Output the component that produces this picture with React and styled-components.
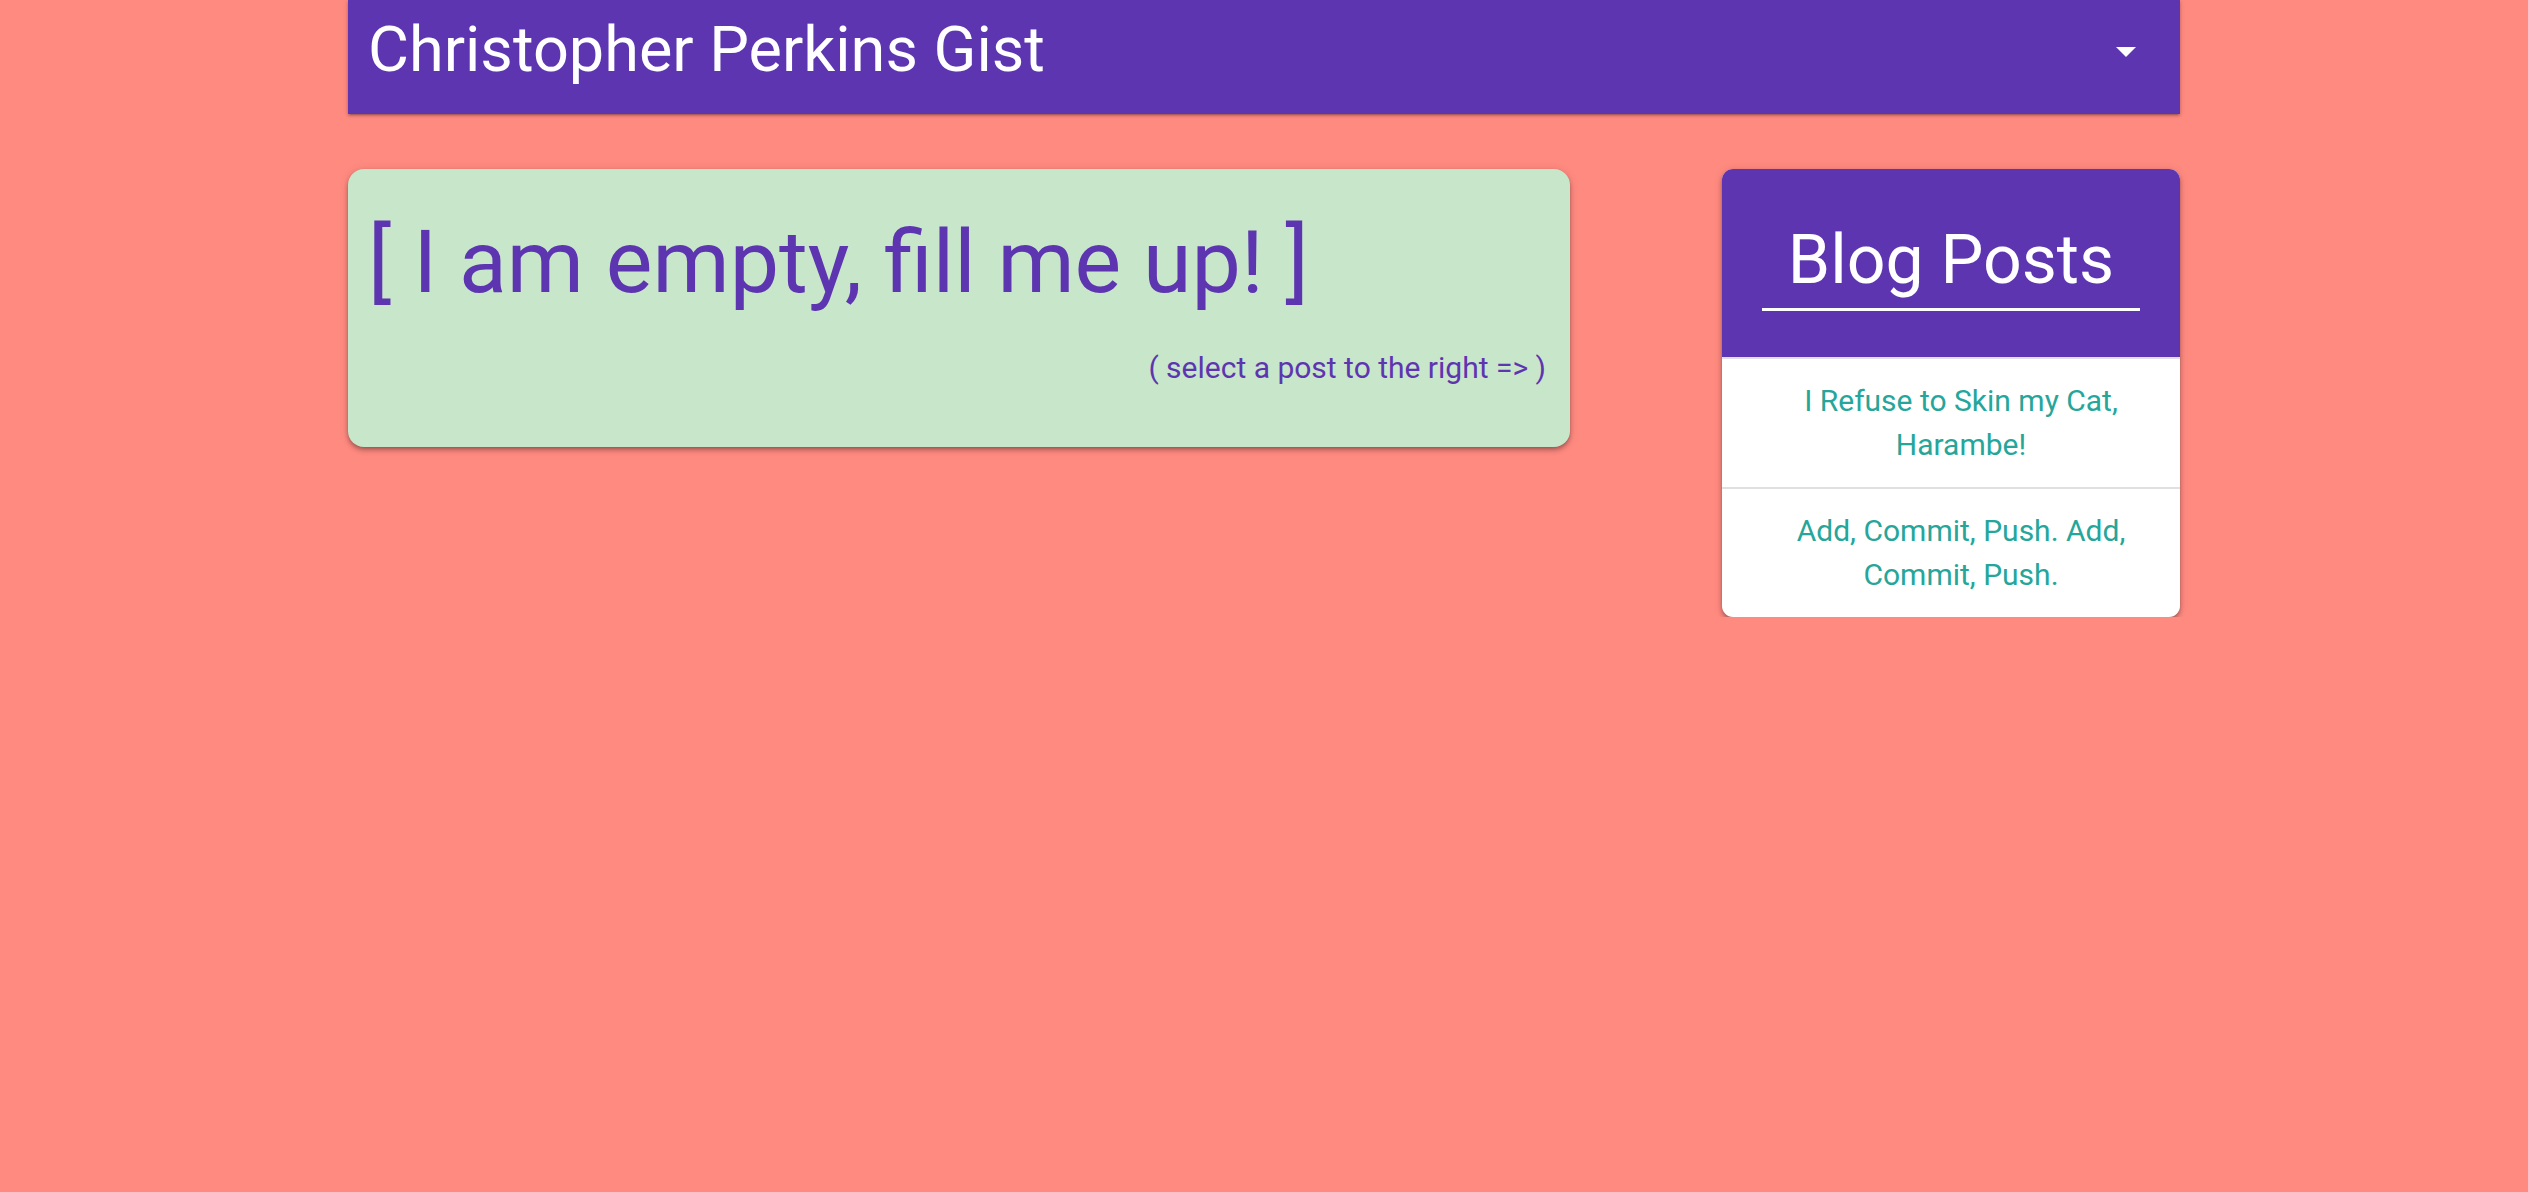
import React from 'react';
import styled, { createGlobalStyle } from 'styled-components';

const GlobalStyle = createGlobalStyle`
  html, body {
    margin: 0;
    padding: 0;
    background-color: #ff8a80;
    font-family: Roboto, "Noto Sans", sans-serif;
    font-weight: 400;
  }
`;

const navShadow = `0 2px 2px 0 rgba(0, 0, 0, 0.14), 0 3px 1px -2px rgba(0, 0, 0, 0.12), 0 1px 5px 0 rgba(0, 0, 0, 0.2)`;
const cardShadow = `0 4px 5px 0 rgba(0, 0, 0, 0.14), 0 1px 10px 0 rgba(0, 0, 0, 0.12), 0 2px 4px -1px rgba(0, 0, 0, 0.3)`;

const Container = styled.div`
  width: 1832px;
  margin: 0 auto;
`;

const Nav = styled.nav`
  height: 114px;
  display: flex;
  flex-direction: row;
  justify-content: space-between;
  align-items: flex-start;
  background-color: #5e35b1;
  box-shadow: ${navShadow};
  padding: 0 30px 0 20px;
  box-sizing: border-box;
`;

const Brand = styled.h1`
  margin: 0;
  padding-top: 12px;
  font-size: 63px;
  font-weight: 400;
  line-height: 75px;
  color: #fff;
`;

const DropButton = styled.button`
  border: none;
  background: none;
  padding: 0;
  margin-top: 27px;
  width: 48px;
  height: 48px;
  cursor: pointer;
`;

const Row = styled.div`
  display: grid;
  grid-template-columns: 1222px 458px;
  justify-content: space-between;
  align-items: start;
  margin-top: 55px;
`;

const EmptyCard = styled.div`
  background-color: #c8e6c9;
  border-radius: 16px;
  box-shadow: ${cardShadow};
  padding: 40px 24px 61px 20px;
`;

const EmptyTitle = styled.h2`
  margin: 0;
  font-size: 88px;
  font-weight: 400;
  line-height: 1.2;
  color: #5e35b1;
`;

const EmptyHint = styled.p`
  margin: 35px 0 0;
  text-align: right;
  font-size: 30px;
  line-height: 1.2;
  color: #5e35b1;
`;

const PostCard = styled.div`
  background-color: #fff;
  border-radius: 11px;
  box-shadow: ${cardShadow};
  overflow: hidden;
`;

const PostHeader = styled.div`
  background-color: #5e35b1;
  padding: 51px 40px 46px;
  border-bottom: 2px solid #e0e0e0;
`;

const PostHeading = styled.h3`
  margin: 0;
  padding-bottom: 6px;
  border-bottom: 3px solid #fff;
  text-align: center;
  font-size: 68px;
  font-weight: 400;
  line-height: 1.2;
  color: #fff;
`;

const PostList = styled.ul`
  list-style: none;
  margin: 0;
  padding: 0;
`;

const PostItem = styled.li`
  border-bottom: ${(p) => (p.last ? 'none' : '2px solid #e0e0e0')};
`;

const PostLink = styled.a`
  display: block;
  padding: 20px 30px 20px 50px;
  text-align: center;
  font-size: 30px;
  line-height: 44px;
  color: #26a69a;
  text-decoration: none;
  cursor: pointer;
`;

const posts = [
  'I Refuse to Skin my Cat, Harambe!',
  'Add, Commit, Push. Add, Commit, Push.'
];

function DropIcon() {
  return (
    <svg width="48" height="48" viewBox="0 0 24 24" fill="#fff">
      <path d="M7 10l5 5 5-5z" />
    </svg>
  );
}

export default function App() {
  return (
    <>
      <GlobalStyle />
      <Container>
        <Nav>
          <Brand>Christopher Perkins Gist</Brand>
          <DropButton aria-label="menu">
            <DropIcon />
          </DropButton>
        </Nav>
        <Row>
          <EmptyCard>
            <EmptyTitle>[ I am empty, fill me up! ]</EmptyTitle>
            <EmptyHint>( select a post to the right =&gt; )</EmptyHint>
          </EmptyCard>
          <PostCard>
            <PostHeader>
              <PostHeading>Blog Posts</PostHeading>
            </PostHeader>
            <PostList>
              {posts.map((title, i) => (
                <PostItem key={title} last={i === posts.length - 1}>
                  <PostLink>{title}</PostLink>
                </PostItem>
              ))}
            </PostList>
          </PostCard>
        </Row>
      </Container>
    </>
  );
}
